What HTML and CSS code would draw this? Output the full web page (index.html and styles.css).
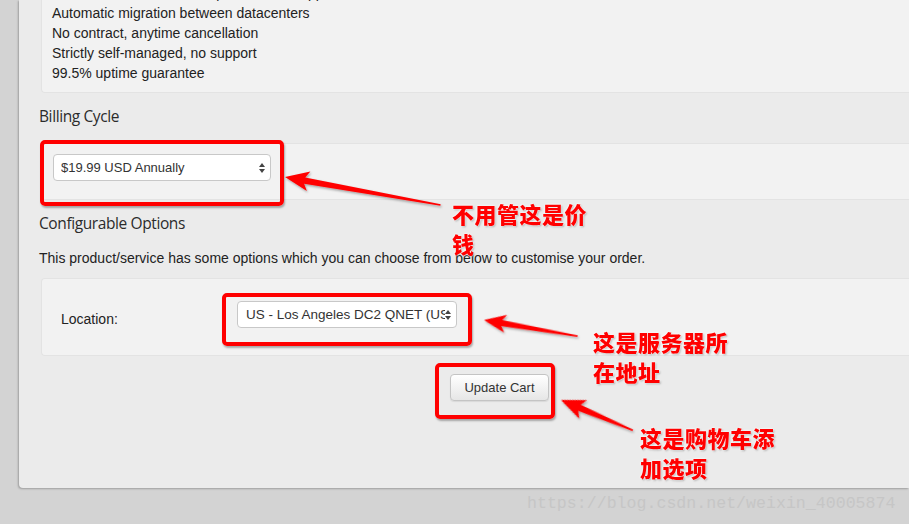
FILE: index.html
```html
<!DOCTYPE html>
<html>
<head>
<meta charset="utf-8">
<link rel="stylesheet" href="styles.css">
</head>
<body>
<div class="panel">
  <div class="well features">
    <div class="line">Dedicated IPv4 address, optional IPv6 support</div>
    <div class="line">Automatic migration between datacenters</div>
    <div class="line">No contract, anytime cancellation</div>
    <div class="line">Strictly self-managed, no support</div>
    <div class="line">99.5% uptime guarantee</div>
  </div>

  <h3 class="heading billing-heading">Billing Cycle</h3>
  <div class="well billing">
    <div class="select billing-select"><span class="select-text">$19.99 USD Annually</span><span class="caret"></span></div>
  </div>

  <h3 class="heading config-heading">Configurable Options</h3>
  <p class="intro">This product/service has some options which you can choose from below to customise your order.</p>
  <div class="well options">
    <div class="opt-label">Location:</div>
    <div class="select loc-select"><span class="select-text">US - Los Angeles DC2 QNET (USD)</span><span class="caret"></span></div>
  </div>

  <div class="actions">
    <button class="btn">Update Cart</button>
  </div>
</div>

<div class="hl hl-billing"></div>
<div class="hl hl-location"></div>
<div class="hl hl-cart"></div>

<svg class="arrows" width="909" height="524" viewBox="0 0 909 524">
  <defs>
    <filter id="sh" x="-20%" y="-50%" width="140%" height="200%">
      <feDropShadow dx="1" dy="1.5" stdDeviation="1" flood-color="#000" flood-opacity="0.35"/>
    </filter>
  </defs>
  <g fill="#ff0000" filter="url(#sh)">
    <polygon transform="translate(285 177) rotate(10.2)" points="0,0 24,-10 20,-3.2 158,-0.8 158,0.8 20,3.2 24,10"/>
    <polygon transform="translate(484 320) rotate(9.8)" points="0,0 22,-9 18,-3 95,-0.8 95,0.8 18,3 22,9"/>
    <polygon transform="translate(561 400) rotate(22.9)" points="0,0 24,-10 20,-3.2 78,-0.8 78,0.8 20,3.2 24,10"/>
  </g>
</svg>

<div class="note note-price">不用管这是价<br>钱</div>
<div class="note note-server">这是服务器所<br>在地址</div>
<div class="note note-cart">这是购物车添<br>加选项</div>

<div class="watermark">https://blog.csdn.net/weixin_40005874</div>
</body>
</html>
```

FILE: styles.css
```css
html, body {
  margin: 0;
  padding: 0;
}
body {
  width: 909px;
  height: 524px;
  overflow: hidden;
  background: #d3d3d3;
  font-family: "Liberation Sans", Arial, sans-serif;
  color: #222;
  position: relative;
}
.panel {
  margin-left: 19px;
  height: 488px;
  background: #ebebeb;
  border-bottom-left-radius: 4px;
  box-shadow: -1px 1px 2px rgba(0,0,0,0.25);
  padding-left: 20px;
  box-sizing: border-box;
  overflow: hidden;
}
.well {
  background: #f2f2f2;
  border: 1px solid #e3e3e3;
  border-right: none;
  border-radius: 4px 0 0 4px;
  margin-left: 2px;
  box-sizing: border-box;
}
.features {
  margin-top: -21px;
  border-top: none;
  border-radius: 0 0 0 4px;
  height: 114px;
  padding: 4px 0 0 10px;
  font-size: 14px;
  line-height: 20px;
  color: #222;
}
.heading {
  margin: 0;
  font-family: "Open Sans", sans-serif;
  font-weight: 400;
  font-size: 15.5px;
  letter-spacing: -0.4px;
  color: #2b2b2b;
  line-height: 20px;
}
.billing-heading {
  margin-top: 13px;
}
.billing {
  margin-top: 17px;
  height: 57px;
  padding: 10px 0 0 11px;
}
.select {
  background: #fff;
  border: 1px solid #c8c8c8;
  border-radius: 4px;
  height: 27px;
  box-sizing: border-box;
  display: flex;
  align-items: center;
  font-size: 13px;
  color: #333;
  position: relative;
  overflow: hidden;
}
.select-text {
  white-space: nowrap;
  overflow: hidden;
}
.billing-select {
  width: 218px;
  padding-left: 7px;
}
.loc-select {
  width: 220px;
  padding-left: 8px;
  padding-right: 11px;
  font-size: 13.5px;
  margin-top: -6px;
}
.caret {
  position: absolute;
  right: 4px;
  top: 8px;
  width: 7px;
  height: 10px;
  background: #fff;
}
.caret::before, .caret::after {
  content: "";
  position: absolute;
  left: 0;
  border-left: 3.5px solid transparent;
  border-right: 3.5px solid transparent;
}
.caret::before {
  top: 0;
  border-bottom: 4px solid #444;
}
.caret::after {
  top: 6px;
  border-top: 4px solid #444;
}
.config-heading {
  margin-top: 13px;
}
.intro {
  margin: 17px 0 0;
  font-size: 14px;
  line-height: 16px;
  color: #222;
}
.options {
  margin-top: 12px;
  height: 78px;
  display: flex;
  align-items: center;
  padding: 0 0 0 19px;
}
.opt-label {
  width: 176px;
  font-size: 14px;
  color: #222;
  margin-top: 4px;
}
.actions {
  padding: 18px 0 0 411px;
}
.btn {
  width: 99px;
  height: 27px;
  border: 1px solid #c4c4c4;
  border-radius: 4px;
  background: linear-gradient(#ffffff, #e6e6e6);
  font-family: "Liberation Sans", Arial, sans-serif;
  font-size: 13px;
  color: #333;
  padding: 0;
  box-shadow: 0 1px 1px rgba(0,0,0,0.08);
}
.hl {
  position: absolute;
  border: 4px solid #ff0000;
  border-radius: 5px;
  box-sizing: border-box;
  box-shadow: 1px 2px 2px rgba(0,0,0,0.3);
}
.hl-billing {
  left: 40px;
  top: 140px;
  width: 244px;
  height: 66px;
}
.hl-location {
  left: 222px;
  top: 293px;
  width: 250px;
  height: 53px;
}
.hl-cart {
  left: 435px;
  top: 363px;
  width: 120px;
  height: 56px;
}
.arrows {
  position: absolute;
  left: 0;
  top: 0;
}
.note {
  position: absolute;
  font-family: "Noto Sans CJK SC", sans-serif;
  font-weight: 800;
  font-size: 22px;
  line-height: 30px;
  color: #ff0000;
  letter-spacing: 0.5px;
  text-shadow: 0 0 2px #fff, 0 0 2px #fff, 1px 1px 2px rgba(0,0,0,0.35);
  white-space: nowrap;
}
.note-price {
  left: 452px;
  top: 198px;
}
.note-server {
  left: 593px;
  top: 326px;
}
.note-cart {
  left: 640px;
  top: 422px;
}
.watermark {
  position: absolute;
  left: 527px;
  top: 494px;
  font-family: "Liberation Mono", monospace;
  font-size: 16.6px;
  line-height: 20px;
  color: #c6c6c6;
}
```
